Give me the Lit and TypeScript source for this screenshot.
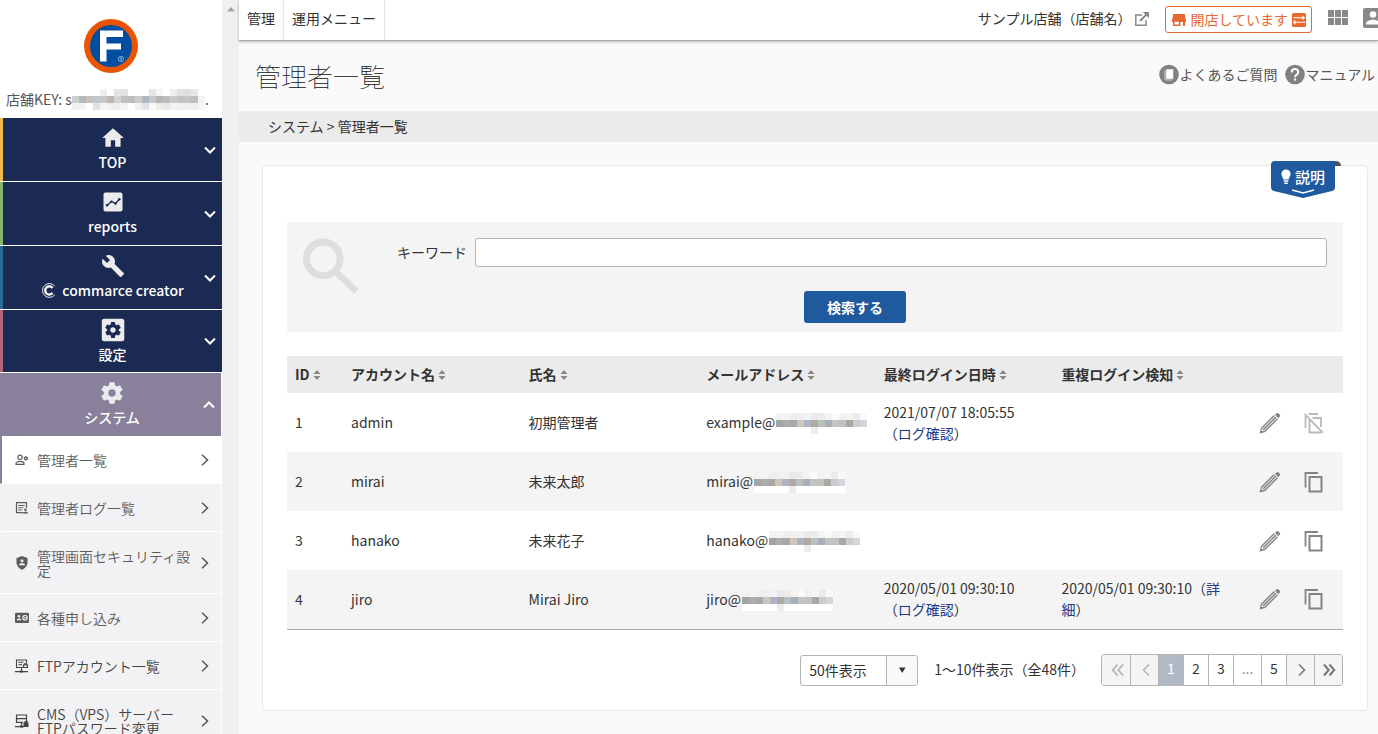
import { LitElement, html, svg, css, nothing, TemplateResult } from "lit";
import { customElement, property, state } from "lit/decorators.js";
import { classMap } from "lit/directives/class-map.js";

const GEAR =
  "M19.43 12.98c.04-.32.07-.64.07-.98s-.03-.66-.07-.98l2.11-1.65c.19-.15.24-.42.12-.64l-2-3.46c-.12-.22-.39-.3-.61-.22l-2.49 1c-.52-.4-1.08-.73-1.69-.98l-.38-2.65C14.46 2.18 14.25 2 14 2h-4c-.25 0-.46.18-.49.42l-.38 2.65c-.61.25-1.17.59-1.69.98l-2.49-1c-.23-.09-.49 0-.61.22l-2 3.46c-.13.22-.07.49.12.64l2.11 1.65c-.04.32-.07.65-.07.98s.03.66.07.98l-2.11 1.65c-.19.15-.24.42-.12.64l2 3.46c.12.22.39.3.61.22l2.49-1c.52.4 1.08.73 1.69.98l.38 2.65c.03.24.24.42.49.42h4c.25 0 .46-.18.49-.42l.38-2.65c.61-.25 1.17-.59 1.69-.98l2.49 1c.23.09.49 0 .61-.22l2-3.46c.12-.22.07-.49-.12-.64l-2.11-1.65zM12 15.5c-1.93 0-3.5-1.57-3.5-3.5s1.57-3.5 3.5-3.5 3.5 1.57 3.5 3.5-1.57 3.5-3.5 3.5z";

interface Glyph {
  w: number;
  h: number;
  box: string;
  art: TemplateResult;
}

const GLYPHS: Record<string, Glyph> = {
  home: { w: 26, h: 26, box: "0 0 24 24", art: svg`<path fill="currentColor" d="M10 20v-6h4v6h5v-8h3L12 3 2 12h3v8z"/>` },
  reports: {
    w: 26, h: 26, box: "0 0 26 26",
    art: svg`<rect x="3.500" y="3.500" width="19" height="19" rx="2" fill="currentColor"/><path d="M7 16.500l4.500-4 4 2 4-4.500" fill="none" stroke="#1b2a52" stroke-width="1.300"/><g fill="#1b2a52"><circle cx="7" cy="16.300" r="1.200"/><circle cx="11.500" cy="12.600" r="1.200"/><circle cx="15.500" cy="14.500" r="1.200"/><circle cx="19.300" cy="10.300" r="1.200"/></g>`,
  },
  wrench: {
    w: 26, h: 26, box: "-1 0 26 26",
    art: svg`<path fill="currentColor" d="M22.700 20l-9.100-9.100c.9-2.300.4-5-1.500-6.900-2-2-5-2.400-7.400-1.300L9 7 6 10 1.600 5.700C.4 8.100.9 11.100 2.900 13.100c1.900 1.900 4.600 2.400 6.900 1.500l9.100 9.100c.4.4 1 .4 1.400 0l2.300-2.300c.5-.4.5-1.100.1-1.400z"/>`,
  },
  panelgear: {
    w: 26, h: 26, box: "0 0 26 26",
    art: svg`<rect x="1.800" y="1.800" width="22.500" height="22.500" rx="2.500" fill="currentColor"/><path fill="#1b2a52" transform="translate(3.500 3.500) scale(.79)" d=${GEAR} />`,
  },
  gear: { w: 26, h: 26, box: "0 0 24 24", art: svg`<path fill="currentColor" d=${GEAR} />` },
  cc: {
    w: 15, h: 15, box: "0 0 15 15",
    art: svg`<g fill="none" stroke="currentColor"><path stroke-width=".9" d="M13.800 3.200A6.900 6.900 0 1 0 13.800 11.800"/><path stroke-width="2.300" d="M11.500 4.900A4.100 4.100 0 1 0 11.500 10.100"/></g>`,
  },
  down: { w: 12, h: 8, box: "0 0 12 8", art: svg`<path d="M1 1.500l5 5 5-5" fill="none" stroke="currentColor" stroke-width="2"/>` },
  up: { w: 12, h: 8, box: "0 0 12 8", art: svg`<path d="M1 6.500l5-5 5 5" fill="none" stroke="currentColor" stroke-width="2"/>` },
  right: { w: 8, h: 12, box: "0 0 8 12", art: svg`<path d="M1 .8L6.500 6 1 11.200" fill="none" stroke="#555" stroke-width="1.500"/>` },
  users: {
    w: 14, h: 14, box: "0 0 14 14",
    art: svg`<g fill="none" stroke="currentColor" stroke-width="1.200"><circle cx="5" cy="4.300" r="2.200"/><path d="M1 11.400v-.8c0-1.500 2.500-2.200 4-2.200 1.600 0 4 .7 4 2.200v.8z"/><circle cx="10.800" cy="5.300" r="1.300"/><path d="M10.800 3v1M8.800 4.300l.8.400M8.800 6.300l.8-.4M12.800 4.300l-.8.400M12.800 6.300l-.8-.4M10.800 6.600v1"/></g>`,
  },
  log: {
    w: 14, h: 14, box: "0 0 14 14",
    art: svg`<path d="M11.500 7V1.700H1.500v10h6.500" fill="none" stroke="currentColor" stroke-width="1.200"/><path d="M3.300 4.500h6.500M3.300 6.800h5M3.300 9h3.500" stroke="currentColor" stroke-width="1"/><circle cx="10.500" cy="8.700" r="1.300" fill="currentColor"/><path d="M7.800 12.500c0-2.400 5.400-2.400 5.400 0z" fill="currentColor"/>`,
  },
  shield: {
    w: 14, h: 14, box: "0 0 14 14",
    art: svg`<path fill="currentColor" d="M7 0l5.500 2v4.300c0 3.500-2.300 6.300-5.500 7.500-3.200-1.200-5.500-4-5.500-7.500V2z"/><circle cx="7" cy="4.800" r="1.500" fill="#f2f2f4"/><path d="M3.900 9.300c0-2.600 6.200-2.600 6.200 0z" fill="#f2f2f4"/>`,
  },
  card: {
    w: 14, h: 14, box: "0 0 14 14",
    art: svg`<rect y="1.800" width="14" height="10.300" rx="1" fill="currentColor"/><g fill="#f2f2f4"><circle cx="4" cy="5.300" r="1.300"/><path d="M1.700 9.200c0-2.400 4.600-2.400 4.600 0z"/><circle cx="10" cy="6.700" r="2.800"/></g><circle cx="10" cy="6.700" r="1.300" fill="none" stroke="currentColor" stroke-width=".9"/>`,
  },
  ftp: {
    w: 14, h: 14, box: "0 0 14 14",
    art: svg`<g fill="none" stroke="currentColor" stroke-width="1.100"><path d="M11.500 4V1H1.500v7.500H8M3.300 3.300h5M3.300 5.800h4M6.500 8.500v3.500M0 12.600h13"/><path d="M8.500 8V6h4v2.500h-4zM9.400 6V4.700h2.200V6"/></g><path d="M5 11.500h3v2H5z" fill="currentColor"/>`,
  },
  server: {
    w: 14, h: 14, box: "0 0 14 14",
    art: svg`<g fill="none" stroke="currentColor" stroke-width="1.200"><path d="M1.500 1h10v3.700h-10zM1.500 4.700v3.700H8M11.500 4.700V8M6.500 8.500v3.500M0 12.600h9"/></g><path d="M8.500 8.500h5V13h-5zM9.500 7h3v2h-3zM5 11.500h3v2H5z" fill="currentColor"/>`,
  },
  ext: {
    w: 16, h: 16, box: "0 0 16 16",
    art: svg`<path d="M8 4H1.800v10.200h10.200V9" fill="none" stroke="#888" stroke-width="1.500"/><path d="M6 10L13 3" stroke="#888" stroke-width="2"/><path d="M8.800 1H15v6.200z" fill="#888"/>`,
  },
  store: {
    w: 14, h: 14, box: "0 0 14 14",
    art: svg`<path fill="currentColor" fill-rule="evenodd" d="M1 1h12v2H1zM1 3l-1 4v2h1v4h7.500V9h2.500v4h2V9h1V7l-1-4zM2.600 8.800v2.600h4.300V8.800z"/>`,
  },
  swap: {
    w: 14, h: 14, box: "0 0 14 14",
    art: svg`<rect width="14" height="14" rx="1.500" fill="currentColor"/><path d="M1 4.300h9.500v-2l2.700 2.500-2.700 2.500v-2H1zM13 8.700H3.500v-2L.8 9.200l2.700 2.500v-2H13z" fill="#fff"/>`,
  },
  apps: {
    w: 20, h: 15, box: "0 0 20 15",
    art: svg`<path fill="#888" d="M0 0h6v7H0zM7 0h6v7H7zM14 0h6v7h-6zM0 8h6v7H0zM7 8h6v7H7zM14 8h6v7h-6z"/>`,
  },
  person: {
    w: 20, h: 20, box: "0 0 20 20",
    art: svg`<rect width="20" height="20" rx="2" fill="#888"/><circle cx="10" cy="6.500" r="3.300" fill="#fff"/><path d="M3 16.500v-1c0-2.500 4.500-3.700 7-3.700s7 1.200 7 3.700v1z" fill="#fff"/>`,
  },
  faq: {
    w: 20, h: 21, box: "0 0 21 21",
    art: svg`<circle cx="10.500" cy="10.500" r="10.300" fill="#808080"/><path d="M7.500 5h7.500v10H7.500z" fill="#fff"/><path d="M6.300 6v10.200h7.500" fill="none" stroke="#d8d8d8" stroke-width="1"/>`,
  },
  help: {
    w: 20, h: 21, box: "0 0 21 21",
    art: svg`<circle cx="10.500" cy="10.500" r="10.300" fill="#808080"/><path d="M7 8.300c0-4.600 7-4.500 7-.3 0 2.700-3.500 2.900-3.500 5.300" fill="none" stroke="#fff" stroke-width="2.100"/><rect x="9.400" y="14.700" width="2.200" height="2.200" fill="#fff"/>`,
  },
  bulb: {
    w: 10, h: 16, box: "0 0 10 16",
    art: svg`<path fill="#fff" d="M5 .5a4.600 4.600 0 0 0-4.600 4.600c0 2 1.400 3.100 1.900 5.300h5.400c.5-2.200 1.900-3.300 1.900-5.300A4.600 4.600 0 0 0 5 .5zM2.700 11.200h4.600v1.600H2.700zM3.300 13.500h3.400v1.500H3.300z"/>`,
  },
  lens: {
    w: 56, h: 56, box: "0 0 56 56",
    art: svg`<g fill="none" stroke="#dedede"><circle cx="20.300" cy="20.800" r="16.800" stroke-width="7"/><path d="M32 32.800l21.500 20.700" stroke-width="6.500"/></g>`,
  },
  sort: { w: 8, h: 10, box: "0 0 8 10", art: svg`<path fill="#888" d="M4 0l3.500 4h-7zM.5 6h7L4 10z"/>` },
  pencil: {
    w: 22, h: 22, box: "0 0 22 22",
    art: svg`<g fill="none" stroke="#848484"><path d="M2.500 16.300L15.300 3.500M4.100 17.900L16.900 5.100M5.700 19.500L18.500 6.700" stroke-width="1.500"/></g><path fill="#848484" d="M16 2.800l1.700-1.500q1-.8 1.900.2l1.200 1.200q.8.900 0 1.900l-1.600 1.600zM2 15.500L.6 21.400l5.900-1.400-1.100-1.200-2 .5-.9-.9.500-1.800z"/>`,
  },
  copy: {
    w: 20, h: 22, box: "0 0 20 22",
    art: svg`<path d="M1.500 16.500V2H14" fill="none" stroke="#848484" stroke-width="1.800"/><rect x="5.500" y="6" width="12" height="14.500" fill="none" stroke="#848484" stroke-width="2"/>`,
  },
  nocopy: {
    w: 20, h: 22, box: "0 0 20 22",
    art: svg`<g fill="none" stroke="#bababa" stroke-width="1.800"><path d="M1.500 16V4M4.500 2H14M5.500 8v12.500H17M8.500 6h8.500v9M.5 2l18.500 18.800"/></g>`,
  },
  first: { w: 13, h: 14, box: "0 0 13 14", art: svg`<path d="M6.500 1.500L1.800 7l4.700 5.500M12 1.500L7.300 7l4.700 5.500" fill="none" stroke="currentColor" stroke-width="1.800"/>` },
  prev: { w: 8, h: 14, box: "0 0 8 14", art: svg`<path d="M7 1.500L1.500 7 7 12.500" fill="none" stroke="currentColor" stroke-width="1.500"/>` },
  next: { w: 8, h: 14, box: "0 0 8 14", art: svg`<path d="M1 1.500L6.500 7 1 12.500" fill="none" stroke="currentColor" stroke-width="1.600"/>` },
  last: { w: 13, h: 14, box: "0 0 13 14", art: svg`<path d="M1 1.500L5.700 7 1 12.500M6.500 1.500L11.200 7l-4.700 5.500" fill="none" stroke="currentColor" stroke-width="2"/>` },
  caret: { w: 8, h: 6, box: "0 0 8 6", art: svg`<path d="M1 .5h6.500L4.200 6z" fill="#333"/>` },
};

@customElement("ui-icon")
class UiIcon extends LitElement {
  static styles = css`
    :host { display: inline-flex; flex: none; }
    svg { display: block; }
  `;
  @property() name = "";
  render() {
    const g = GLYPHS[this.name];
    return g
      ? html`<svg width=${g.w} height=${g.h} viewBox=${g.box} aria-hidden="true">${g.art}</svg>`
      : nothing;
  }
}

const TOP_TONES = ["#f2f2f2", "#f3f4f4", "#efefef", "#f0eeee", "#f1f2f3", "#e9eaeb", "#ececec", "#f5f4f3", "#fafaf9", "#f1f1f2", "#f5f5f6", "#edecea", "#f9fafd"];
const MID_TONES = ["#a4a4a4", "#adadad", "#a8a8a6", "#cfc5ba", "#aeb2c4", "#b1a7a3", "#b9c1c0", "#a8afba", "#c4c4c4", "#c1c1c0", "#a9a9a4", "#cccdd0", "#d6d6da"];
const KEY_ROWS = [
  ["", "", "", "", "#efefef", "", "#e5e5e5", "#e2e3e4", "", "", "", "#e5e5ea", "#f5f8f8", "", "#ededed", "#e1e2e1", "#dedfde", "#e7e6e5", ""],
  ["#cfcfcf", "#b6b6bb", "#c8c0bd", "#c0c8cf", "#c8c8c8", "#b9b9b9", "#d4d4d4", "#c0c0c1", "#bcbcbf", "#d3cdca", "#b1b6c3", "#c9c8cc", "#b6b6b6", "#bdbdbd", "#c8c8ca", "#c1c2c2", "#c6c6c6", "#bebfbf", "#f3f3f5"],
  ["#efefef", "#f4f4f4", "", "#e2e2e2", "#f5f5f5", "#f1f1f1", "#eeeeee", "#f3f3f3", "", "#f3eeec", "#e1e4ea", "#f8f8f8", "#f0eceb", "#e7e8ea", "#f4f4f4", "#f1f1f1", "#f1f1f1", "#eeeeee", "#f6f6f6"],
];

/** Pixelated cover used where private values are hidden. */
@customElement("masked-value")
class MaskedValue extends LitElement {
  static styles = css`
    :host { display: inline-flex; flex: none; }
    svg { display: block; }
  `;
  @property() kind = "mail";
  render() {
    const rows = this.kind === "key"
      ? KEY_ROWS
      : [TOP_TONES, MID_TONES, MID_TONES.map((_, i) => (i === 5 ? "#ececec" : "#ffffff"))];
    const w = rows[0].length * 7;
    return html`<svg width=${w} height="21" viewBox="0 0 ${w} 21" shape-rendering="crispEdges" aria-hidden="true">
      ${rows.map((r, y) => r.map((c, x) => (c ? svg`<rect x=${x * 7} y=${y * 7} width="7" height="7" fill=${c} />` : nothing)))}
    </svg>`;
  }
}

const MENU = [
  { icon: "home", label: "TOP", tone: "gold" },
  { icon: "reports", label: "reports", tone: "green" },
  { icon: "wrench", label: "commarce creator", tone: "teal", mark: true },
  { icon: "panelgear", label: "設定", tone: "rose" },
];

const SUBMENU = [
  { icon: "users", label: "管理者一覧", current: true },
  { icon: "log", label: "管理者ログ一覧" },
  { icon: "shield", label: "管理画面セキュリティ設定" },
  { icon: "card", label: "各種申し込み" },
  { icon: "ftp", label: "FTPアカウント一覧", dark: true },
  { icon: "server", label: "CMS（VPS）サーバーFTPパスワード変更", dark: true },
];

const HEADS = ["ID", "アカウント名", "氏名", "メールアドレス", "最終ログイン日時", "重複ログイン検知"];

const ROWS = [
  { id: 1, account: "admin", name: "初期管理者", mail: "example@", last: "2021/07/07 18:05:55", dup: "", locked: true },
  { id: 2, account: "mirai", name: "未来太郎", mail: "mirai@", last: "", dup: "", locked: false },
  { id: 3, account: "hanako", name: "未来花子", mail: "hanako@", last: "", dup: "", locked: false },
  { id: 4, account: "jiro", name: "Mirai Jiro", mail: "jiro@", last: "2020/05/01 09:30:10", dup: "2020/05/01 09:30:10", locked: false },
];

@customElement("app-root")
class AppRoot extends LitElement {
  static styles = css`
    :host {
      display: flex;
      height: 100vh;
      overflow: hidden;
      background: #fafafa;
      color: #333;
      font: 14px/21px "Noto Sans CJK JP", "Noto Sans", sans-serif;
    }
    * { box-sizing: border-box; }
    a { color: inherit; text-decoration: none; }
    button, input, select { font: inherit; color: inherit; margin: 0; }
    button { border: 0; background: none; padding: 0; cursor: pointer; }

    .side { flex: none; width: 239px; display: flex; background: #fff; overflow: hidden; }
    .nav { flex: 1; min-width: 0; }
    .track { width: 17px; background: #f0f0f0; display: flex; justify-content: center; padding-top: 7px; }
    .brand { height: 118px; padding-top: 18px; }
    .logo { display: block; margin: 0 auto; }
    .key { display: flex; align-items: center; height: 21px; margin-top: 15px; padding-left: 6px; color: #555; white-space: pre; }
    .group {
      width: 100%; height: 63px; margin-bottom: 1px; padding: 0 6px;
      display: grid; grid-template-columns: 12px 1fr 12px; align-items: center;
      background: #1b2a52; color: #fff; border-left: 3px solid; font-weight: 500;
    }
    .gold { border-color: #f0b74d; }
    .green { border-color: #86b56b; }
    .teal { border-color: #2c6a94; }
    .rose { border-color: #b26478; height: 62px; }
    .open { background: #89819b; border-color: #89819b; width: 221px; margin: 0; }
    .face { grid-column: 2; display: flex; flex-direction: column; align-items: center; padding-bottom: 1px; color: #ebebeb; }
    .caption { display: flex; align-items: center; gap: 6px; margin-top: 1px; color: #fff; }
    .sub { list-style: none; margin: 0; padding: 0; width: 221px; background: #f2f2f4; }
    .subitem {
      display: grid; grid-template-columns: 14px 156px 8px; column-gap: 8px; align-items: center;
      padding: 17px 10px 16px 13px; border-left: 2px solid #f2f2f4; border-bottom: 1px solid #fff;
      line-height: 14px; font-weight: 350; color: #5c5c5c;
    }
    .current { background: #fff; border-left-color: #89819b; }
    .dark { color: #444; }

    .main { flex: 1; min-width: 0; display: flex; flex-direction: column; }
    .bar { position: relative; display: flex; flex: none; height: 41px; background: #fff; border-bottom: 1px solid #aaa; box-shadow: 0 1px 3px #0004; }
    .tab { padding: 8px 8px 0; border-right: 1px solid #e6e6e6; }
    .tools { margin-left: auto; display: flex; align-items: flex-start; }
    .shop { display: flex; align-items: center; gap: 3px; padding-top: 8px; }
    .status {
      display: flex; align-items: center; gap: 4px; height: 27px; margin: 6px 16px 0 15px; padding: 0 5px 0 6px;
      border: 1px solid #e8692f; border-radius: 3px; background: #fff; color: #e8692f;
    }
    .apps { margin-top: 10px; display: flex; }
    .me { width: 15px; margin: 8px 0 0 15px; overflow: hidden; display: flex; }

    .heading { flex: none; display: flex; align-items: center; justify-content: space-between; height: 70px; padding: 0 3px 2px 16px; }
    h1 { margin: 0; font-size: 26px; line-height: 39px; font-weight: 100; color: #111; }
    .helps { display: flex; gap: 8px; color: #555; padding-bottom: 2px; }
    .help { display: flex; align-items: center; }
    .crumbs { flex: none; padding: 5px 29px; background: #ebebeb; }

    .card { position: relative; margin: 23px 10px 0 23px; padding: 56px 24px 24px; background: #fff; border: 1px solid #e8e8e8; border-radius: 4px; }
    .note { position: absolute; top: -5px; right: 26px; width: 70px; height: 37px; display: flex; align-items: flex-start; }
    .note svg { position: absolute; inset: 0; }
    .notetext { position: relative; display: flex; align-items: center; gap: 4px; padding: 5px 0 0 10px; color: #fff; font-weight: 500; font-size: 15px; line-height: 21px; }
    .search { display: grid; grid-template-columns: 96px 1fr; padding: 16px 16px 9px 0; background: #f4f4f4; }
    .lens { padding: 0 0 0 16px; }
    .field { display: flex; align-items: center; gap: 8px; padding-left: 14px; }
    .field input { flex: 1; min-width: 0; height: 29px; padding: 0 8px; border: 1px solid #b4b4b4; border-radius: 3px; background: #fff; }
    .go { display: block; width: 102px; height: 32px; margin: 24px auto 0; border-radius: 3px; background: #1f5a9e; color: #fff; font-weight: 700; }

    table { width: 100%; margin-top: 24px; table-layout: fixed; border-collapse: collapse; border-bottom: 1px solid #aaa; }
    .cid { width: 56px; }
    .cact { width: 112px; }
    th { height: 37px; padding: 0 8px; background: #ebebeb; text-align: left; font-weight: 700; }
    .sorter { display: flex; align-items: center; gap: 3px; font-weight: 700; white-space: nowrap; }
    td { height: 59px; padding: 0 8px; }
    tbody tr:nth-child(even) { background: #f4f4f4; }
    .mail { display: flex; align-items: center; gap: 1px; }
    .mail masked-value { margin-top: 2px; }
    .link { color: #1b3a8a; }
    .acts { display: flex; justify-content: center; gap: 23px; padding-left: 8px; }
    .acts button { display: flex; }
    .cell-acts { padding: 0; }

    .pager { display: flex; justify-content: flex-end; align-items: center; gap: 16px; margin-top: 24px; }
    .perpage { position: relative; display: flex; width: 118px; height: 31px; margin-top: 1px; }
    .perpage select { appearance: none; width: 100%; padding: 0 40px 0 8px; border: 1px solid #b4b4b4; border-radius: 3px; background: #fff; }
    .drop { position: absolute; top: 1px; right: 1px; bottom: 1px; width: 31px; display: flex; align-items: center; justify-content: center; border-left: 1px solid #b4b4b4; background: #fafafa; border-radius: 0 2px 2px 0; pointer-events: none; }
    .pages { display: flex; height: 32px; border: 1px solid #b4b4b4; border-radius: 3px; overflow: hidden; }
    .page { width: 25px; display: flex; align-items: center; justify-content: center; border-left: 1px solid #b4b4b4; padding-bottom: 2px; }
    .page:first-child { border-left: 0; }
    .wide { width: 28px; }
    .arrow { background: #f4f4f4; padding: 1px 0 0 2px; color: #777; }
    .off { color: #b4b4b4; }
    .on { background: #b1b9c4; color: #fff; }
    .dots { color: #999; }
  `;

  @state() private page = 1;

  private group(g: { icon: string; label: string; tone: string; mark?: boolean }) {
    const open = g.tone === "open";
    return html`<button class=${classMap({ group: true, [g.tone]: true })} aria-expanded=${open}>
      <span class="face">
        <ui-icon name=${g.icon}></ui-icon>
        <span class="caption">${g.mark ? html`<ui-icon name="cc"></ui-icon>` : nothing}${g.label}</span>
      </span>
      <ui-icon name=${open ? "up" : "down"}></ui-icon>
    </button>`;
  }

  private pageButton(n: number) {
    return html`<button class=${classMap({ page: true, on: n === this.page })} @click=${() => (this.page = n)}>${n}</button>`;
  }

  render() {
    return html`
      <aside class="side">
        <nav class="nav">
          <div class="brand">
            <svg class="logo" width="56" height="56" viewBox="0 0 56 56" role="img" aria-label="F">
              <circle cx="28" cy="28" r="27" fill="#ea5504" />
              <circle cx="28" cy="28" r="21" fill="#004ea2" />
              <path d="M17 12.500h23v6.500H23.500v6.500h14.500v6H23.500v12H17z" fill="#fff" />
              <circle cx="38" cy="41" r="2.600" fill="none" stroke="#b9cde4" stroke-width=".7" />
              <path d="M39 39.800h-1.500v1h1v1.300H37" fill="none" stroke="#b9cde4" stroke-width=".6" />
            </svg>
            <div class="key">店舗KEY: s<masked-value kind="key"></masked-value>.</div>
          </div>
          ${MENU.map((g) => this.group(g))}
          ${this.group({ icon: "gear", label: "システム", tone: "open" })}
          <ul class="sub">
            ${SUBMENU.map((s) => html`<li>
              <a href="#" class=${classMap({ subitem: true, current: !!s.current, dark: !!s.dark })}>
                <ui-icon name=${s.icon}></ui-icon><span>${s.label}</span><ui-icon name="right"></ui-icon>
              </a>
            </li>`)}
          </ul>
        </nav>
        <div class="track"><svg width="8" height="5" viewBox="0 0 8 5"><path d="M0 4.500L4 0l4 4.500z" fill="#a3a3a3" /></svg></div>
      </aside>

      <main class="main">
        <header class="bar">
          <a class="tab" href="#">管理</a>
          <a class="tab" href="#">運用メニュー</a>
          <div class="tools">
            <a class="shop" href="#">サンプル店舗（店舗名）<ui-icon name="ext"></ui-icon></a>
            <button class="status"><ui-icon name="store"></ui-icon>開店しています<ui-icon name="swap"></ui-icon></button>
            <button class="apps" aria-label="アプリ"><ui-icon name="apps"></ui-icon></button>
            <button class="me" aria-label="アカウント"><ui-icon name="person"></ui-icon></button>
          </div>
        </header>

        <div class="heading">
          <h1>管理者一覧</h1>
          <div class="helps">
            <a class="help" href="#"><ui-icon name="faq"></ui-icon>よくあるご質問</a>
            <a class="help" href="#"><ui-icon name="help"></ui-icon>マニュアル</a>
          </div>
        </div>
        <nav class="crumbs"><a href="#">システム</a> &gt; 管理者一覧</nav>

        <section class="card">
          <button class="note">
            <svg width="70" height="37" viewBox="0 0 70 37">
              <path d="M64 0q6 0 6 5h-6z" fill="#555" />
              <path d="M4 0h60v26q0 3-3 4L32 37 3 30q-3-1-3-4V4q0-4 4-4z" fill="#1f5a9e" />
              <path d="M21 29l11 3 11-3" fill="none" stroke="#fff" stroke-width="1.300" />
            </svg>
            <span class="notetext"><ui-icon name="bulb"></ui-icon>説明</span>
          </button>

          <form class="search" @submit=${(e: Event) => e.preventDefault()}>
            <div class="lens"><ui-icon name="lens"></ui-icon></div>
            <div>
              <div class="field"><label for="kw">キーワード</label><input id="kw" type="text" /></div>
              <button class="go">検索する</button>
            </div>
          </form>

          <table>
            <colgroup><col class="cid" /><col /><col /><col /><col /><col /><col class="cact" /></colgroup>
            <thead>
              <tr>${HEADS.map((h) => html`<th><button class="sorter">${h}<ui-icon name="sort"></ui-icon></button></th>`)}<th></th></tr>
            </thead>
            <tbody>
              ${ROWS.map((r) => html`<tr>
                <td>${r.id}</td>
                <td>${r.account}</td>
                <td>${r.name}</td>
                <td><div class="mail">${r.mail}<masked-value></masked-value></div></td>
                <td>${r.last ? html`${r.last}<br />（<a class="link" href="#">ログ確認</a>）` : nothing}</td>
                <td>${r.dup ? html`${r.dup}（<a class="link" href="#">詳細</a>）` : nothing}</td>
                <td class="cell-acts"><div class="acts">
                  <button aria-label="編集"><ui-icon name="pencil"></ui-icon></button>
                  <button aria-label="複製" ?disabled=${r.locked}><ui-icon name=${r.locked ? "nocopy" : "copy"}></ui-icon></button>
                </div></td>
              </tr>`)}
            </tbody>
          </table>

          <div class="pager">
            <div class="perpage">
              <select aria-label="表示件数"><option>50件表示</option><option>100件表示</option></select>
              <span class="drop"><ui-icon name="caret"></ui-icon></span>
            </div>
            <span>1〜10件表示（全48件）</span>
            <div class="pages">
              <button class="page wide arrow off" aria-label="最初"><ui-icon name="first"></ui-icon></button>
              <button class="page wide arrow off" aria-label="前"><ui-icon name="prev"></ui-icon></button>
              ${[1, 2, 3].map((n) => this.pageButton(n))}
              <span class="page wide dots">...</span>
              ${this.pageButton(5)}
              <button class="page wide arrow" aria-label="次"><ui-icon name="next"></ui-icon></button>
              <button class="page wide arrow" aria-label="最後"><ui-icon name="last"></ui-icon></button>
            </div>
          </div>
        </section>
      </main>
    `;
  }
}
